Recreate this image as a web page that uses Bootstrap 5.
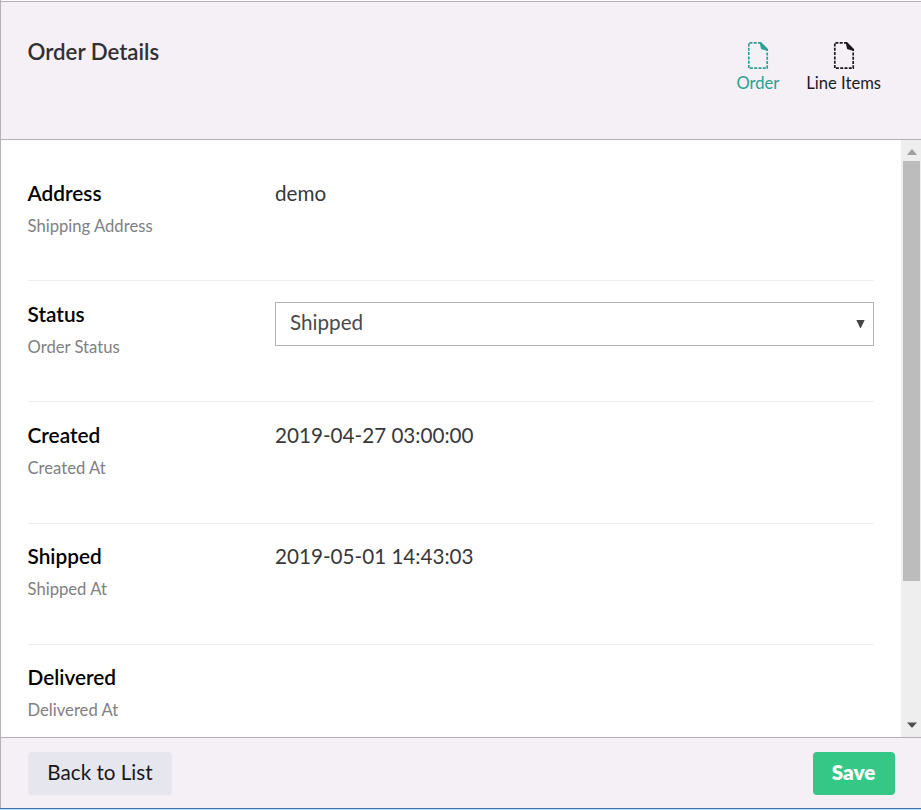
<!DOCTYPE html>
<html lang="en">
<head>
<meta charset="utf-8">
<meta name="viewport" content="width=device-width, initial-scale=1">
<title>Order Details</title>
<link href="https://cdn.jsdelivr.net/npm/bootstrap@5.3.0/dist/css/bootstrap.min.css" rel="stylesheet">
<style>
body { font-family: Lato, sans-serif; color: #303033; background: #fff; }
.editor { height: 810px; padding-top: 1px; border-left: 1px solid #b2b2b5; }
.editor-head { height: 139px; background: #f5eff6; border-top: 1px solid #b2b0b5; border-bottom: 1px solid #b2b0b5; padding: 36px 40px 0 26.5px; }
.editor-head h1 { font-size: 22.25px; font-weight: 600; line-height: 27px; }
.app-tab { font-size: 16.6px; line-height: 20px; color: #1b1b1f; text-decoration: none; padding-top: 3px; }
.app-tab.active { color: #2aa192; margin-right: 27px; }
.app-tab svg { display: block; margin: 0 auto 3px; }
.editor-main { height: 597px; }
.fields { padding: 20px 27px 0 26.5px; }
.field { height: 121.2px; padding-top: 18.6px; border-bottom: 1px solid #eeeef0; }
.field:last-child { border-bottom: 0; }
.field-name { width: 247.5px; }
.field-name label { display: block; font-size: 20.8px; font-weight: 600; line-height: 28px; color: #000; }
.field-name span { display: block; font-size: 16.65px; line-height: 22px; color: #808083; margin-top: 8px; }
.field-value { font-size: 20.65px; line-height: 28px; color: #38383b; }
.field-select { height: 44px; margin-top: 2.2px; border: 1px solid #b4b4b6; padding: 0 8px 0 14px; font-size: 20.65px; color: #4a4a4e; }
.field-select span { padding-bottom: 3px; }
.scroll-track { width: 20px; background: #eee; padding: 9px 1px 9px 2px; }
.scroll-thumb { height: 420px; width: 17px; background: #bcbcbc; margin-top: 6px; }
.editor-foot { height: 71px; border-top: 1px solid #b2b0b5; background: #f5eff6; padding: 0 26px 0 27px; }
.foot-btn { height: 43px; border: 0; border-radius: 4px; font-size: 20.65px; line-height: 1; padding: 0 0 1px; }
.btn-back { width: 144px; background: #e6e6ef; color: #18181c; }
.btn-save { width: 82px; background: #35c786; color: #fff; font-weight: 800; padding-right: 1px; }
.editor-edge { height: 2px; margin-left: -1px; background: #c5d9ec; border-top: 1px solid #3675b5; }
</style>
</head>
<body class="overflow-hidden">
<div class="editor d-flex flex-column">
  <header class="editor-head d-flex justify-content-between align-items-start">
    <h1 class="m-0">Order Details</h1>
    <nav class="d-flex">
      <a href="#" class="app-tab active text-center">
        <svg width="22" height="29" viewBox="0 0 22 29" fill="none" stroke="currentColor" stroke-width="1.7"><path stroke-dasharray="3 1.3" d="M14 1.8H1.8V27.2H20.2V8"/><path d="M12.5 1H14L21 8V10L15.5 8.5Q13.5 8 13.5 5.5Z" fill="currentColor" stroke="none"/></svg>
        Order</a>
      <a href="#" class="app-tab text-center">
        <svg width="22" height="29" viewBox="0 0 22 29" fill="none" stroke="currentColor" stroke-width="1.7"><path stroke-dasharray="3 1.3" d="M14 1.8H1.8V27.2H20.2V8"/><path d="M12.5 1H14L21 8V10L15.5 8.5Q13.5 8 13.5 5.5Z" fill="currentColor" stroke="none"/></svg>
        Line Items</a>
    </nav>
  </header>
  <main class="editor-main d-flex overflow-hidden">
    <div class="fields flex-grow-1">
      <div class="field d-flex"><div class="field-name"><label>Address</label><span>Shipping Address</span></div><div class="field-value">demo</div></div>
      <div class="field d-flex"><div class="field-name"><label>Status</label><span>Order Status</span></div>
        <div class="field-select flex-grow-1 d-flex align-items-center justify-content-between" role="combobox" aria-label="Status"><span>Shipped</span>
          <svg width="9" height="8" viewBox="0 0 9 8"><path d="M.3 0H8.7L4.8 8H4.2Z" fill="#454548"/></svg></div></div>
      <div class="field d-flex"><div class="field-name"><label>Created</label><span>Created At</span></div><div class="field-value">2019-04-27 03:00:00</div></div>
      <div class="field d-flex"><div class="field-name"><label>Shipped</label><span>Shipped At</span></div><div class="field-value">2019-05-01 14:43:03</div></div>
      <div class="field d-flex"><div class="field-name"><label>Delivered</label><span>Delivered At</span></div></div>
    </div>
    <div class="scroll-track flex-shrink-0 d-flex flex-column align-items-center">
      <svg class="flex-shrink-0" width="10" height="6" viewBox="0 0 10 6"><path d="M0 6L4.5 .5H5.5L10 6Z" fill="#a0a0a0"/></svg>
      <div class="scroll-thumb"></div>
      <svg class="mt-auto flex-shrink-0" width="10" height="6" viewBox="0 0 10 6"><path d="M0 .5H10L5.5 5.5H4.5Z" fill="#505050"/></svg>
    </div>
  </main>
  <footer class="editor-foot d-flex justify-content-between align-items-center">
    <button class="btn foot-btn btn-back">Back to List</button>
    <button class="btn foot-btn btn-save">Save</button>
  </footer>
  <div class="editor-edge"></div>
</div>
<script src="https://cdn.jsdelivr.net/npm/bootstrap@5.3.0/dist/js/bootstrap.bundle.min.js"></script>
</body>
</html>
